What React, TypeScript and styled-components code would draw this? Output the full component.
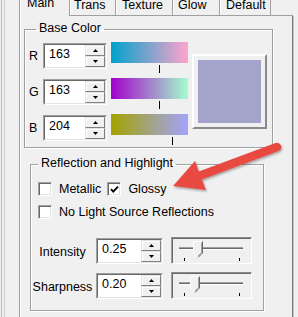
import styled, { createGlobalStyle } from 'styled-components'

const GlobalStyle = createGlobalStyle`
  html, body {
    margin: 0;
    padding: 0;
    background: #f0f0f0;
  }
  body {
    font-family: 'Liberation Sans', Arial, sans-serif;
    font-size: 12.5px;
    color: #000;
  }
`

const tabs = [
  { label: 'Main', width: 51, pad: 7, active: true },
  { label: 'Trans', width: 46, pad: 4 },
  { label: 'Texture', width: 57, pad: 6 },
  { label: 'Glow', width: 47, pad: 5 },
  { label: 'Default', width: 51, pad: 6 },
]

const channels = [
  { name: 'R', value: 163, from: 'rgb(0,163,204)', to: 'rgb(255,163,204)' },
  { name: 'G', value: 163, from: 'rgb(163,0,204)', to: 'rgb(163,255,204)' },
  { name: 'B', value: 204, from: 'rgb(163,163,0)', to: 'rgb(163,163,255)' },
]

const BAR_WIDTH = 77

const ArrowUp = () => (
  <svg width='5' height='3' viewBox='0 0 5 3'>
    <polygon points='2.5,0 5,3 0,3' fill='#000' />
  </svg>
)

const ArrowDown = () => (
  <svg width='5' height='3' viewBox='0 0 5 3'>
    <polygon points='0,0 5,0 2.5,3' fill='#000' />
  </svg>
)

const Spin = ({ value, width }: { value: string; width: number }) => (
  <SpinFrame $width={width}>
    <SpinInner>
      <Edit>{value}</Edit>
      <SpinButtons>
        <SpinButton>
          <ArrowUp />
        </SpinButton>
        <SpinButton>
          <ArrowDown />
        </SpinButton>
      </SpinButtons>
    </SpinInner>
  </SpinFrame>
)

const CheckBox = ({ checked }: { checked?: boolean }) => (
  <Check>
    {checked && (
      <svg width='9' height='9' viewBox='0 0 9 9'>
        <path d='M1 4.2 L3.3 6.6 L8 1.6' stroke='#000' strokeWidth='1.8' fill='none' />
      </svg>
    )}
  </Check>
)

const Trackbar = ({ value }: { value: number }) => (
  <TrackFrame>
    <TrackLine />
    <TickRow>
      <Tick />
      <Tick />
    </TickRow>
    <Thumb style={{ left: Math.round(12 + value * 55 - 5) }}>
      <svg width='10' height='17' viewBox='0 0 10 17'>
        <polygon points='0.5,0.5 9.5,0.5 9.5,12 5,16.5 0.5,12' fill='#f0f0f0' />
        <polyline points='0.5,12 0.5,0.5 9,0.5' stroke='#fff' fill='none' />
        <polyline points='9.5,0.5 9.5,12 5,16.5' stroke='#696969' fill='none' />
        <polyline points='8.5,1.5 8.5,11.6 5,15' stroke='#a0a0a0' fill='none' />
        <line x1='0.5' y1='12' x2='4.6' y2='16.2' stroke='#fff' />
      </svg>
    </Thumb>
  </TrackFrame>
)

const App = () => {
  return (
    <>
      <GlobalStyle />
      <Screen>
        <LeftEdge />
        <MainColumn>
          <TabRow>
            {tabs.map((tab) => (
              <Tab key={tab.label} $width={tab.width} $pad={tab.pad} $active={!!tab.active}>
                {tab.label}
              </Tab>
            ))}
            <TabFiller />
          </TabRow>
          <Panel>
            <BaseGroup>
              <Legend>Base Color</Legend>
              <BaseBody>
                <ChannelList>
                  {channels.map((ch) => (
                    <ChannelRow key={ch.name}>
                      <ChannelLabel>{ch.name}</ChannelLabel>
                      <SpinSlot>
                        <Spin value={String(ch.value)} width={64} />
                      </SpinSlot>
                      <ColorSlider>
                        <ColorBar $from={ch.from} $to={ch.to} />
                        <TickZone>
                          <ColorTick
                            style={{ left: Math.round((ch.value / 255) * BAR_WIDTH) - 1 }}
                          />
                        </TickZone>
                      </ColorSlider>
                    </ChannelRow>
                  ))}
                </ChannelList>
                <Swatch>
                  <SwatchColor $color='rgb(163,163,204)' />
                </Swatch>
              </BaseBody>
            </BaseGroup>

            <ReflectionGroup>
              <Legend>Reflection and Highlight</Legend>
              <CheckList>
                <CheckRow>
                  <CheckBox />
                  <CheckLabel>Metallic</CheckLabel>
                  <CheckGap />
                  <CheckBox checked />
                  <CheckLabel>Glossy</CheckLabel>
                </CheckRow>
                <CheckRow>
                  <CheckBox />
                  <CheckLabel>No Light Source Reflections</CheckLabel>
                </CheckRow>
              </CheckList>
              <ParamList>
                <ParamRow>
                  <ParamLabel>Intensity</ParamLabel>
                  <Spin value='0.25' width={67} />
                  <Trackbar value={0.25} />
                </ParamRow>
                <ParamRow>
                  <ParamLabel>Sharpness</ParamLabel>
                  <Spin value='0.20' width={67} />
                  <Trackbar value={0.2} />
                </ParamRow>
              </ParamList>
            </ReflectionGroup>
          </Panel>
        </MainColumn>

        <Callout width='298' height='317' viewBox='0 0 298 317'>
          <defs>
            <filter id='shadow' x='-10%' y='-10%' width='130%' height='140%'>
              <feDropShadow dx='1' dy='1.5' stdDeviation='1.2' floodColor='#000' floodOpacity='0.35' />
            </filter>
          </defs>
          <g filter='url(#shadow)' fill='#e8493f'>
            <line
              x1='277'
              y1='147'
              x2='199'
              y2='176'
              stroke='#e8493f'
              strokeWidth='8.5'
              strokeLinecap='round'
            />
            <polygon points='173,186 195,161 200,175 206,190' />
          </g>
        </Callout>
      </Screen>
    </>
  )
}

export default App

const Screen = styled.div`
  position: relative;
  width: 298px;
  height: 317px;
  overflow: hidden;
  display: flex;
  background: #f0f0f0;
`

const LeftEdge = styled.div`
  flex: none;
  width: 19px;
  background: linear-gradient(
    to right,
    transparent 1px,
    #b9b9b9 1px,
    #b9b9b9 2px,
    transparent 2px,
    transparent 4px,
    #d0d0d0 4px,
    #d0d0d0 5px,
    transparent 5px
  );
`

const MainColumn = styled.div`
  flex: none;
  width: 274px;
  display: flex;
  flex-direction: column;
`

const TabRow = styled.div`
  display: flex;
  height: 16px;
`

const Tab = styled.div<{ $width: number; $pad: number; $active: boolean }>`
  box-sizing: border-box;
  flex: none;
  width: ${(p) => p.$width}px;
  height: 16px;
  padding-left: ${(p) => p.$pad}px;
  line-height: ${(p) => (p.$active ? 7 : 11)}px;
  white-space: nowrap;
  border-right: 1px solid #a0a0a0;
  border-bottom: ${(p) => (p.$active ? 'none' : '1px solid #a0a0a0')};
  box-shadow: inset 1px 0 0 #fff;
  &:first-child {
    border-left: 1px solid #a0a0a0;
  }
`

const TabFiller = styled.div`
  flex: 1;
  border-bottom: 1px solid #a0a0a0;
`

const Panel = styled.div`
  flex: 1;
  border-left: 1px solid #a0a0a0;
  border-right: 1px solid #7a7a7a;
  box-shadow: inset 1px 0 0 #fff, 1px 0 0 #c4c4c4;
`

const Group = styled.fieldset`
  box-sizing: border-box;
  min-width: 0;
  margin: 0;
  padding: 0;
  border: 1px solid #a0a0a0;
  box-shadow: 1px 1px 0 #fff, inset 1px 1px 0 #fff;
`

const BaseGroup = styled(Group)`
  width: 249px;
  margin: 5px 0 0 4px;
  padding: 0 4px 2px 4px;
`

const ReflectionGroup = styled(Group)`
  width: 234px;
  margin: 8px 0 0 10px;
  padding: 0 0 11px 0;
`

const Legend = styled.legend`
  margin-left: 7px;
  padding: 0 3px 3px;
  line-height: 14px;
`

const BaseBody = styled.div`
  display: flex;
  align-items: flex-start;
  padding-top: 4px;
`

const ChannelList = styled.div`
  display: flex;
  flex-direction: column;
  gap: 5px;
`

const ChannelRow = styled.div`
  display: flex;
  align-items: flex-start;
  height: 31px;
`

const ChannelLabel = styled.div`
  width: 14px;
  height: 26px;
  margin-top: 1px;
  display: flex;
  align-items: center;
`

const SpinSlot = styled.div`
  margin-top: 1px;
`

const SpinFrame = styled.div<{ $width: number }>`
  box-sizing: border-box;
  width: ${(p) => p.$width}px;
  height: 26px;
  border: 1px solid;
  border-color: #a0a0a0 #fff #fff #a0a0a0;
  display: flex;
`

const SpinInner = styled.div`
  flex: 1;
  display: flex;
  border: 1px solid;
  border-color: #696969 #e3e3e3 #e3e3e3 #696969;
  background: #fff;
`

const Edit = styled.div`
  flex: 1;
  padding: 2px 0 0 4px;
  line-height: 14px;
`

const SpinButtons = styled.div`
  width: 20px;
  display: flex;
  flex-direction: column;
`

const SpinButton = styled.div`
  box-sizing: border-box;
  flex: 1;
  display: flex;
  align-items: center;
  justify-content: center;
  background: #f0f0f0;
  border: 1px solid;
  border-color: #e3e3e3 #808080 #808080 #e3e3e3;
  box-shadow: inset 1px 1px 0 #fff;
`

const ColorSlider = styled.div`
  width: ${BAR_WIDTH}px;
  margin-left: 4px;
  display: flex;
  flex-direction: column;
`

const ColorBar = styled.div<{ $from: string; $to: string }>`
  height: 21px;
  background: linear-gradient(to right, ${(p) => p.$from}, ${(p) => p.$to});
`

const TickZone = styled.div`
  position: relative;
  height: 10px;
`

const ColorTick = styled.div`
  position: absolute;
  top: 2px;
  width: 1px;
  height: 8px;
  background: #000;
`

const Swatch = styled.div`
  box-sizing: border-box;
  width: 75px;
  height: 75px;
  margin: 12px 0 0 4px;
  padding: 4px;
  border: 2px solid;
  border-color: #fff #8a8a8a #8a8a8a #fff;
`

const SwatchColor = styled.div<{ $color: string }>`
  width: 100%;
  height: 100%;
  background: ${(p) => p.$color};
`

const CheckList = styled.div`
  display: flex;
  flex-direction: column;
  gap: 9px;
  padding: 9px 0 0 7px;
`

const CheckRow = styled.div`
  display: flex;
  align-items: center;
  height: 14px;
`

const Check = styled.div`
  box-sizing: border-box;
  flex: none;
  width: 14px;
  height: 14px;
  display: flex;
  align-items: center;
  justify-content: center;
  background: #fff;
  border: 1px solid;
  border-color: #a0a0a0 #fff #fff #a0a0a0;
  box-shadow: inset 1px 1px 0 #696969, inset -1px -1px 0 #e3e3e3;
`

const CheckLabel = styled.span`
  margin-left: 7px;
  white-space: nowrap;
`

const CheckGap = styled.span`
  width: 6px;
`

const ParamList = styled.div`
  display: flex;
  flex-direction: column;
  gap: 8px;
  margin-top: 18px;
`

const ParamRow = styled.div`
  display: flex;
  align-items: center;
  height: 27px;
`

const ParamLabel = styled.div`
  width: 63px;
  margin-right: 2px;
  padding-top: 2px;
  text-align: center;
  white-space: nowrap;
`

const TrackFrame = styled.div`
  position: relative;
  box-sizing: border-box;
  width: 81px;
  height: 27px;
  margin-left: 8px;
  border: 1px solid;
  border-color: #8a8a8a #fff #fff #a0a0a0;
  box-shadow: inset 1px 1px 0 #696969;
  display: flex;
  flex-direction: column;
`

const TrackLine = styled.div`
  width: 64px;
  height: 1px;
  margin: 9px 0 0 7px;
  border-top: 1px solid #a0a0a0;
  border-bottom: 1px solid #fff;
  background: #696969;
`

const TickRow = styled.div`
  display: flex;
  justify-content: space-between;
  width: 56px;
  margin: 8px 0 0 12px;
`

const Tick = styled.div`
  width: 1px;
  height: 3px;
  background: #000;
`

const Thumb = styled.div`
  position: absolute;
  top: 3px;
  width: 10px;
  height: 17px;
  line-height: 0;
`

const Callout = styled.svg`
  position: absolute;
  top: 0;
  left: 0;
  pointer-events: none;
`
